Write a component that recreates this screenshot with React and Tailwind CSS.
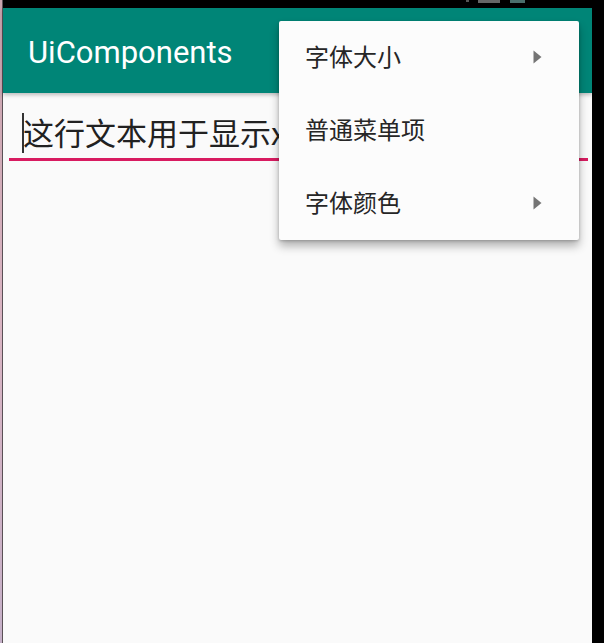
export default function App() {
  const items = [
    { label: "字体大小", sub: true },
    { label: "普通菜单项", sub: false },
    { label: "字体颜色", sub: true },
  ];
  return (
    <div className="relative w-[604px] h-[643px] flex flex-row overflow-hidden bg-black">
      {/* left strip */}
      <div className="w-[3px] h-full flex flex-row">
        <div className="w-[2px] h-full bg-gradient-to-b from-[#c9a3ad] via-[#d9b4c2] to-[#c5b0c8]" />
        <div className="w-[1px] h-full bg-[#5a5056]" />
      </div>
      {/* main */}
      <div className="w-[589px] h-full flex flex-col">
        <div className="h-[8px] bg-black relative">
          <div className="absolute left-[463px] top-0 w-[3px] h-[2px] bg-[#555]" />
          <div className="absolute left-[475px] top-0 w-[22px] h-[3px] bg-[#666]" />
          <div className="absolute left-[507px] top-0 w-[15px] h-[3px] bg-[#4a6f6c]" />
        </div>
        <div
          className="h-[85px] bg-[#008577] flex items-center pl-[25px] text-white text-[31px] shadow-[0_2px_4px_rgba(0,0,0,0.25)] relative z-10"
          style={{ fontFamily: "Roboto, 'Noto Sans', sans-serif" }}
        >
          <span className="mt-[5px]">UiComponents</span>
        </div>
        <div className="flex-1 bg-[#fafafa] pt-[17px] pl-[6px] pr-[4px]">
          <div className="relative border-b-[3px] border-[#d81b60] h-[51px] pl-[13px] overflow-hidden">
            <div className="absolute left-[13px] top-[3px] w-[1.5px] h-[40px] bg-[#333]" />
            <div
              className="text-[31px] leading-[44px] text-[#212121] whitespace-nowrap pl-[1px]"
              style={{ fontFamily: "'Noto Sans CJK SC', 'Noto Sans', sans-serif" }}
            >
              这行文本用于显示xx
            </div>
          </div>
        </div>
      </div>
      {/* right black */}
      <div className="w-[12px] h-full bg-black" />

      {/* popup menu */}
      <div
        className="absolute left-[279px] top-[21px] w-[300px] bg-[#fcfcfc] rounded-[2px] shadow-[0_6px_10px_rgba(0,0,0,0.3),0_1px_3px_rgba(0,0,0,0.2)] z-20 flex flex-col"
        style={{ fontFamily: "'Noto Sans CJK SC', 'Noto Sans', sans-serif" }}
      >
        {items.map((it) => (
          <div key={it.label} className="h-[73px] flex items-center pl-[26px] pr-[37px] pb-[3px] text-[24px] text-[#262626]">
            <span className="flex-1">{it.label}</span>
            {it.sub && (
              <svg width="9" height="14" viewBox="0 0 9 14" className="mt-[1px]">
                <path d="M0.5 0.5 L8.5 7 L0.5 13.5 Z" fill="#757575" />
              </svg>
            )}
          </div>
        ))}
      </div>
    </div>
  );
}
